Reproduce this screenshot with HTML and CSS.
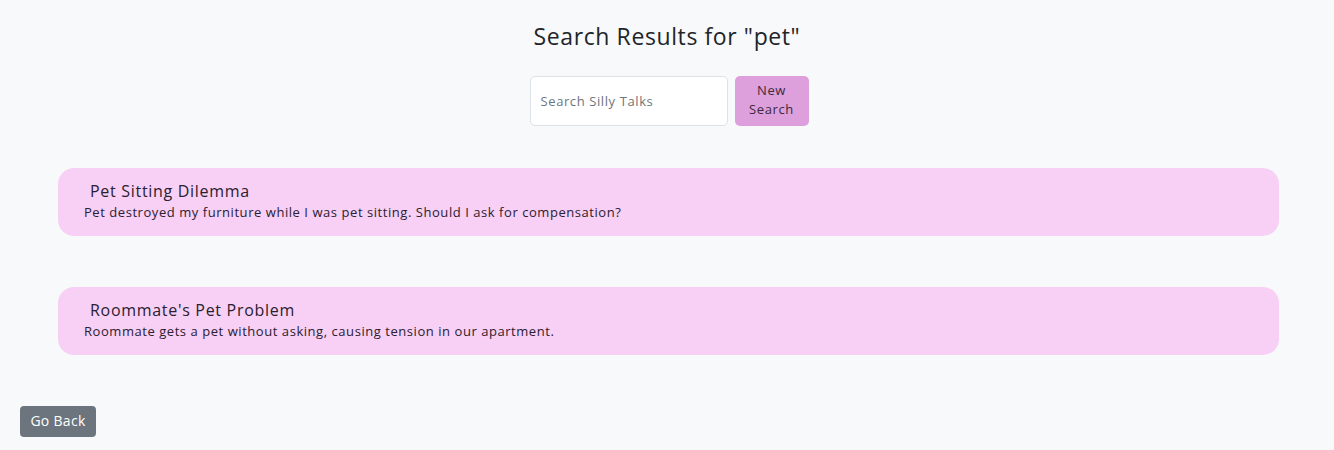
FILE: index.html
```html
<!DOCTYPE html>
<html lang="en">
<head>
<meta charset="utf-8">
<title>Search Results</title>
<link rel="stylesheet" href="styles.css">
</head>
<body>
<main class="page">
  <h1 class="title">Search Results for "pet"</h1>
  <form class="search">
    <input class="search-input" type="text" placeholder="Search Silly Talks">
    <button class="search-btn" type="button">New<br>Search</button>
  </form>
  <section class="results">
    <article class="card">
      <h2 class="card-title">Pet Sitting Dilemma</h2>
      <p class="card-text">Pet destroyed my furniture while I was pet sitting. Should I ask for compensation?</p>
    </article>
    <article class="card">
      <h2 class="card-title">Roommate's Pet Problem</h2>
      <p class="card-text">Roommate gets a pet without asking, causing tension in our apartment.</p>
    </article>
  </section>
  <div class="footer">
    <button class="back-btn" type="button">Go Back</button>
  </div>
</main>
</body>
</html>
```

FILE: styles.css
```css
* { box-sizing: border-box; }
html, body { margin: 0; padding: 0; }
body {
  background: #f8f9fa;
  font-family: "Open Sans", "Lato", sans-serif;
  color: #212529;
  width: 1334px;
  height: 450px;
  overflow: hidden;
}
.page {
  display: flex;
  flex-direction: column;
  padding-top: 20px;
}
.title {
  margin: 0;
  text-align: center;
  font-size: 23px;
  font-weight: 400;
  line-height: 32px;
  letter-spacing: 0.6px;
}
.search {
  display: flex;
  justify-content: center;
  gap: 7px;
  margin-top: 24px;
  margin-left: 4px;
}
.search-input {
  width: 198px;
  height: 50px;
  border: 1px solid #dee2e6;
  border-radius: 5px;
  background: #fff;
  padding: 0 10px;
  font-family: inherit;
  font-size: 13px;
  letter-spacing: 0.6px;
}
.search-input::placeholder { color: #6c757d; }
.search-btn {
  width: 74px;
  height: 50px;
  border: none;
  border-radius: 5px;
  background: #dda0dd;
  color: #3a2a3a;
  font-family: inherit;
  font-size: 13px;
  line-height: 19px;
  letter-spacing: 0.6px;
  padding: 0 0 3px 0;
}
.results {
  display: flex;
  flex-direction: column;
  gap: 51px;
  margin: 42px 55px 0 58px;
}
.card {
  background: #f8d0f5;
  border-radius: 16px;
  height: 68px;
  padding: 13px 26px 0 26px;
}
.card-title {
  margin: 0 0 0 6px;
  font-size: 16px;
  font-weight: 400;
  line-height: 20px;
  color: #2a2030;
  letter-spacing: 0.7px;
}
.card-text {
  margin: 2px 0 0 0;
  font-size: 13px;
  line-height: 18px;
  color: #2a2030;
  letter-spacing: 0.55px;
}
.footer {
  margin-top: 51px;
  padding-left: 20px;
}
.back-btn {
  width: 76px;
  height: 31px;
  border: none;
  border-radius: 4px;
  background: #6c757d;
  color: #fff;
  font-family: inherit;
  font-size: 14px;
  letter-spacing: 0.3px;
  padding: 0 0 3px 0;
}
```
